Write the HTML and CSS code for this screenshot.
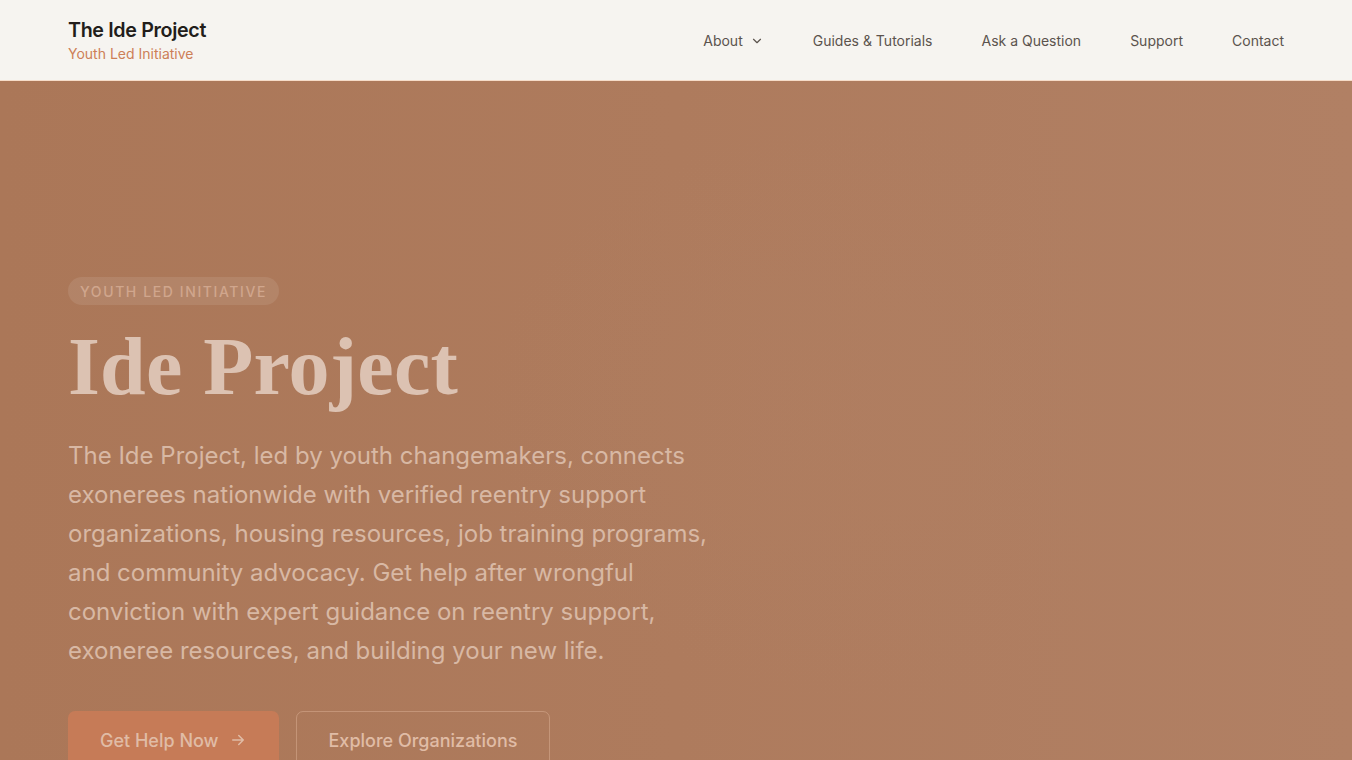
FILE: index.html
```html
<!DOCTYPE html>
<html lang="en">
<head>
    <meta charset="UTF-8">
    <meta name="viewport" content="width=device-width, initial-scale=1.0">
    <title>The Ide Project</title>
    <link rel="stylesheet" href="styles.css">
</head>
<body>

<!-- Site Header -->
<header class="site-header">
    <a class="brand" href="#">
        <span class="brand-name">The Ide Project</span>
        <span class="brand-tag">Youth Led Initiative</span>
    </a>
    <nav class="main-nav">
        <a href="#" class="nav-link">About
            <svg class="chevron" width="14" height="14" viewBox="0 0 24 24" fill="none" stroke="currentColor" stroke-width="2" stroke-linecap="round" stroke-linejoin="round"><path d="M6 9l6 6 6-6"/></svg>
        </a>
        <a href="#" class="nav-link">Guides &amp; Tutorials</a>
        <a href="#" class="nav-link">Ask a Question</a>
        <a href="#" class="nav-link">Support</a>
        <a href="#" class="nav-link">Contact</a>
    </nav>
</header>

<!-- Hero Section -->
<section class="hero">
    <div class="hero-inner">
        <span class="pill">Youth Led Initiative</span>
        <h1 class="hero-title">Ide Project</h1>
        <p class="hero-text">The Ide Project, led by youth changemakers, connects exonerees nationwide with verified reentry support organizations, housing resources, job training programs, and community advocacy. Get help after wrongful conviction with expert guidance on reentry support, exoneree resources, and building your new life.</p>
        <div class="hero-actions">
            <a href="#" class="btn btn-primary">Get Help Now
                <svg width="18" height="18" viewBox="0 0 24 24" fill="none" stroke="currentColor" stroke-width="2" stroke-linecap="round" stroke-linejoin="round"><path d="M5 12h14M13 6l6 6-6 6"/></svg>
            </a>
            <a href="#" class="btn btn-outline">Explore Organizations</a>
        </div>
    </div>
</section>

</body>
</html>
```

FILE: styles.css
```css
/* Basic Reset */
* {
    margin: 0;
    padding: 0;
    box-sizing: border-box;
}

body {
    font-family: 'Inter', 'Noto Sans', sans-serif;
    background-color: #ad7a5c;
    height: 100vh;
    overflow: hidden;
}

a {
    text-decoration: none;
}

/* Header */
.site-header {
    height: 81px;
    background-color: #f6f4f0;
    border-bottom: 1px solid #f6dcc8;
    display: flex;
    align-items: center;
    justify-content: space-between;
    padding: 0 68px;
}

.brand {
    display: flex;
    flex-direction: column;
    gap: 3px;
    margin-top: -1px;
}

.brand-name {
    font-size: 19.7px;
    font-weight: 600;
    color: #221d1a;
    letter-spacing: -0.35px;
}

.brand-tag {
    font-size: 14px;
    color: #cd7f57;
}

.main-nav {
    display: flex;
    align-items: center;
    gap: 49px;
}

.nav-link {
    font-size: 14px;
    color: #5b534d;
    display: flex;
    align-items: center;
    gap: 7px;
}

.chevron {
    margin-top: 1px;
}

/* Hero */
.hero {
    height: calc(100vh - 81px);
    background:
        radial-gradient(ellipse 600px 420px at 900px 330px, rgba(176, 127, 98, 0.5), rgba(176, 127, 98, 0) 70%),
        linear-gradient(90deg, #ab7758 0%, #ae7b5d 50%, #b18064 100%);
    padding: 196px 68px 0;
}

.hero-inner {
    max-width: 660px;
}

.pill {
    display: inline-block;
    font-size: 14px;
    font-weight: 500;
    letter-spacing: 1.6px;
    text-transform: uppercase;
    color: #d0a68d;
    background-color: rgba(255, 255, 255, 0.09);
    border-radius: 14px;
    padding: 5px 12px 4px;
    line-height: 19px;
}

.hero-title {
    font-family: 'Liberation Serif', 'DejaVu Serif', serif;
    font-weight: 700;
    font-size: 82px;
    letter-spacing: 0.2px;
    color: #dcc2b2;
    line-height: 1;
    margin-top: 21px;
}

.hero-text {
    margin-top: 28px;
    font-size: 24px;
    line-height: 39px;
    color: #d8b8a4;
    max-width: 660px;
}

.hero-actions {
    display: flex;
    gap: 17px;
    margin-top: 41px;
}

.btn {
    display: flex;
    align-items: center;
    gap: 10px;
    height: 58px;
    padding: 0 32px;
    border-radius: 7px;
    font-size: 18px;
    font-weight: 500;
    color: #e0bca6;
}

.btn-primary {
    background-color: #c67b57;
}

.btn-outline {
    border: 1px solid rgba(240, 200, 175, 0.35);
}
```
